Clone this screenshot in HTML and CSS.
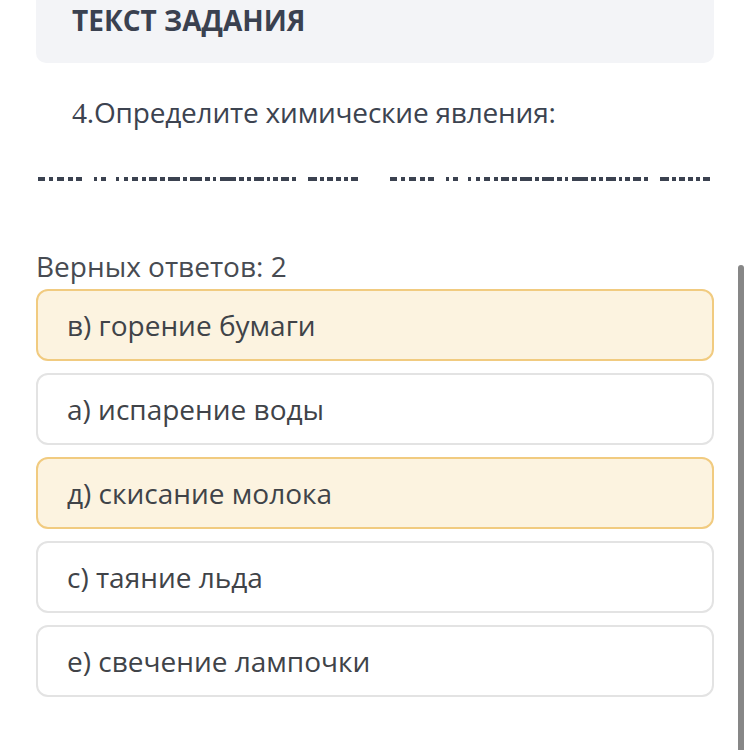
FILE: index.html
```html
<!DOCTYPE html>
<html lang="ru">
<head>
<meta charset="utf-8">
<title>Тест</title>
<link rel="stylesheet" href="styles.css">
</head>
<body>
<div class="page">
  <div class="task-head">ТЕКСТ ЗАДАНИЯ</div>
  <div class="question"><span class="num">4</span>.Определите химические явления:</div>
  <div class="dashes">
    <svg width="678" height="6" viewBox="0 0 678 6" xmlns="http://www.w3.org/2000/svg">
      <defs>
        <g id="dp" fill="#3b4250">
          <rect x="0" y="0" width="7" height="4"/><rect x="11" y="0" width="4" height="4"/><rect x="19" y="0" width="7" height="4"/><rect x="30" y="0" width="5" height="4"/><rect x="38" y="0" width="6" height="4"/>
          <rect x="56" y="0" width="3" height="4"/><rect x="63" y="0" width="5" height="4"/>
          <rect x="78" y="0" width="3" height="4"/><rect x="86" y="0" width="4" height="4"/><rect x="94" y="0" width="6" height="4"/><rect x="104" y="0" width="4" height="4"/><rect x="111" y="0" width="8" height="4"/><rect x="122" y="0" width="5" height="4"/><rect x="130" y="0" width="12" height="4"/><rect x="145" y="0" width="4" height="4"/><rect x="152" y="0" width="12" height="4"/><rect x="167" y="0" width="5" height="4"/><rect x="175" y="0" width="3" height="4"/>
          <rect x="182" y="0" width="16" height="4"/><rect x="201" y="0" width="5" height="4"/><rect x="209" y="0" width="4" height="4"/><rect x="216" y="0" width="10" height="4"/><rect x="229" y="0" width="3" height="4"/><rect x="235" y="0" width="5" height="4"/><rect x="243" y="0" width="8" height="4"/><rect x="254" y="0" width="4" height="4"/>
          <rect x="270" y="0" width="9" height="4"/><rect x="282" y="0" width="4" height="4"/><rect x="289" y="0" width="6" height="4"/><rect x="298" y="0" width="5" height="4"/><rect x="306" y="0" width="4" height="4"/><rect x="313" y="0" width="7" height="4"/>
        </g>
      </defs>
      <use href="#dp" x="2" y="1"/>
      <use href="#dp" x="354" y="1"/>
    </svg>
  </div>
  <div class="count">Верных ответов: 2</div>
  <div class="options">
    <div class="option selected">в) горение бумаги</div>
    <div class="option">а) испарение воды</div>
    <div class="option selected">д) скисание молока</div>
    <div class="option">с) таяние льда</div>
    <div class="option">е) свечение лампочки</div>
  </div>
</div>
<div class="scrollbar"></div>
</body>
</html>
```
FILE: styles.css
```css
html, body {
  margin: 0;
  padding: 0;
  background: #ffffff;
  height: 750px;
  overflow: hidden;
}
body {
  font-family: "Open Sans", "Noto Sans", sans-serif;
  color: #3d4350;
}
.page {
  padding: 0 36px;
}
.task-head {
  background: #f3f4f7;
  border-radius: 0 0 10px 10px;
  height: 63px;
  box-sizing: border-box;
  padding: 0 0 0 36px;
  font-size: 28px;
  font-weight: 700;
  line-height: 40px;
  color: #3a4150;
}
.question {
  margin-top: 29px;
  padding-left: 36px;
  font-size: 28px;
  line-height: 40px;
  color: #3c4350;
  letter-spacing: -0.2px;
}
.num {
  font-family: "Liberation Serif", serif;
  font-size: 30px;
}
.dashes {
  margin-top: 43px;
  height: 6px;
  line-height: 0;
}
.dashes svg {
  display: block;
}
.count {
  margin-top: 66px;
  font-size: 28px;
  line-height: 36px;
  color: #474b52;
}
.options {
  display: flex;
  flex-direction: column;
  gap: 12px;
  margin-top: 5px;
}
.option {
  height: 72px;
  box-sizing: border-box;
  border: 2px solid #e3e3e3;
  border-radius: 12px;
  background: #ffffff;
  display: flex;
  align-items: center;
  padding-left: 29px;
  font-size: 28px;
  color: #404348;
}
.option.selected {
  background: #fcf3e0;
  border-color: #f1cb80;
}
.scrollbar {
  position: absolute;
  left: 738px;
  top: 265px;
  width: 6px;
  height: 500px;
  background: #878787;
  border-radius: 3px 3px 0 0;
}
```
